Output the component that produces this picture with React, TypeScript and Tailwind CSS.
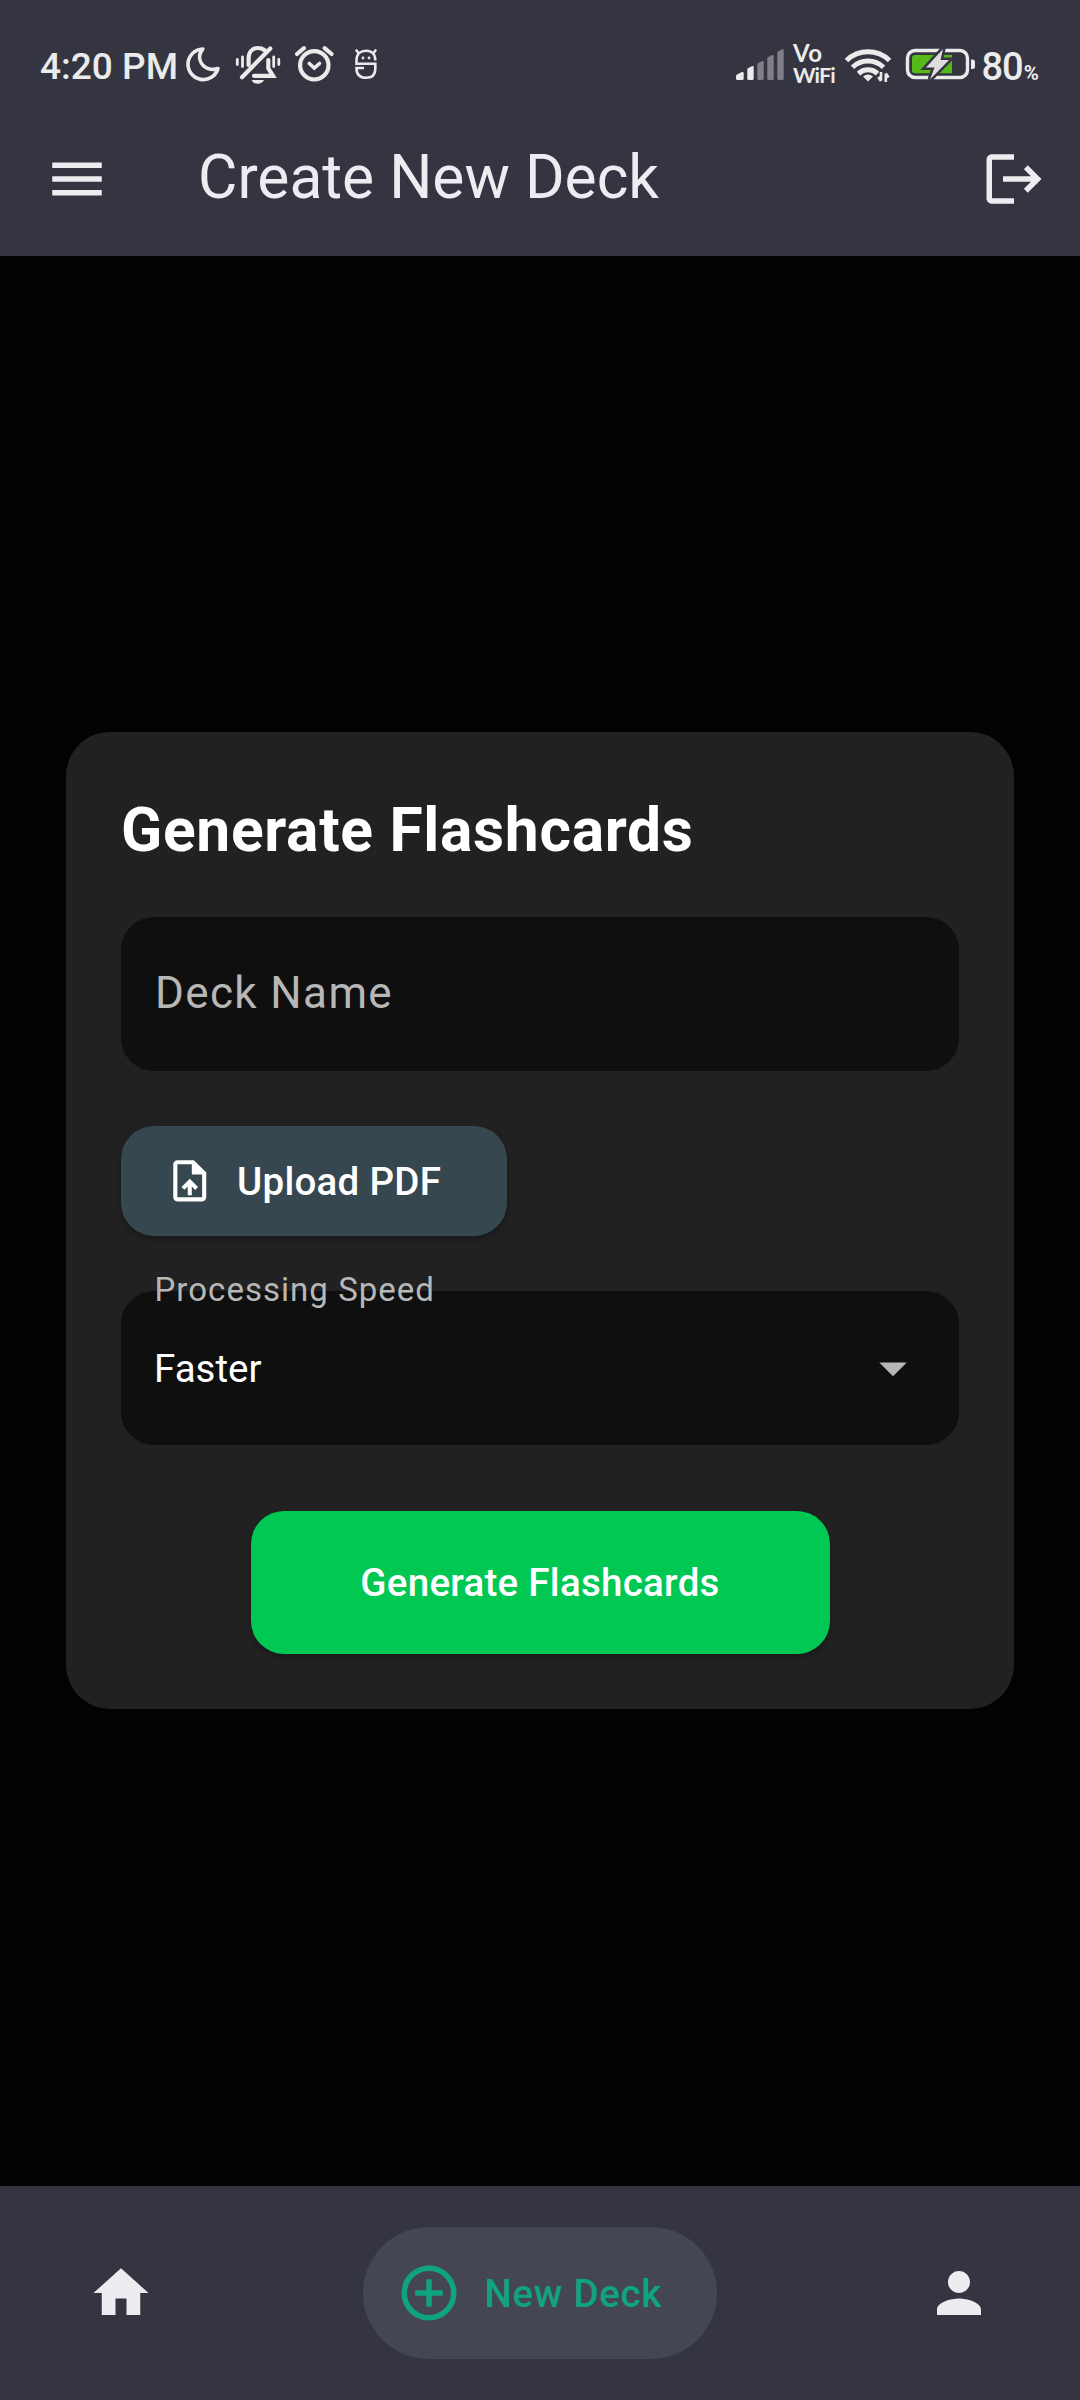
import React from "react";

type IconProps = { d: string; className: string };

function MaterialIcon({ d, className }: IconProps) {
  return (
    <svg viewBox="0 0 24 24" fill="currentColor" className={className} aria-hidden="true">
      <path d={d} />
    </svg>
  );
}

const ICONS = {
  menu: "M3 18h18v-2H3v2zm0-5h18v-2H3v2zm0-7v2h18V6H3z",
  logout:
    "m17 7-1.41 1.41L18.17 11H8v2h10.17l-2.58 2.58L17 17l5-5zM4 5h8V3H4c-1.1 0-2 .9-2 2v14c0 1.1.9 2 2 2h8v-2H4z",
  upload:
    "M14 2H6c-1.1 0-1.99.9-1.99 2L4 20c0 1.1.89 2 1.99 2H18c1.1 0 2-.9 2-2V8l-6-6zm4 18H6V4h7v5h5v11zM8 15.01l1.41 1.41L11 14.84V19h2v-4.16l1.59 1.59L16 15.01 12.01 11z",
  dropdown: "m7 10 5 5 5-5z",
  home: "M10 20v-6h4v6h5v-8h3L12 3 2 12h3v8z",
  addCircle:
    "M13 7h-2v4H7v2h4v4h2v-4h4v-2h-4V7zm-1-5C6.48 2 2 6.48 2 12s4.48 10 10 10 10-4.48 10-10S17.52 2 12 2zm0 18c-4.41 0-8-3.59-8-8s3.59-8 8-8 8 3.59 8 8-3.59 8-8 8z",
  person:
    "M12 12c2.21 0 4-1.79 4-4s-1.79-4-4-4-4 1.79-4 4 1.79 4 4 4zm0 2c-2.67 0-8 1.34-8 4v2h16v-2c0-2.66-5.33-4-8-4z",
};

function LeftStatus() {
  return (
    <div className="flex">
      <span className="ml-[40px] mt-[47px] w-[144px] whitespace-nowrap text-[37px] leading-[40px] font-medium">
        4:20 PM
      </span>
      <svg viewBox="184 0 46 102" className="h-[102px] w-[46px]" fill="none" stroke="currentColor">
        <path
          d="M202.800 49A15.300 15.300 0 1 0 218 68.500C212 70.500 204.500 69 201 62.500C198.500 58 199.500 53 202.800 49Z"
          strokeWidth="3.600"
          strokeLinejoin="round"
        />
      </svg>
      <svg viewBox="230 0 60 102" className="h-[102px] w-[60px]" fill="none" stroke="currentColor" strokeWidth="4.200" strokeLinecap="round">
        <path d="M242 77.300L270.300 48.500" />
        <path d="M248.600 65V58.500C248.600 52 252.500 48 258 48C260.500 48 262.600 48.700 264.300 50" />
        <path d="M268.300 60V68.500L273 75.800H254" />
        <path d="M251.500 80h12.500c-1.500 2.600-3.500 3.800-6.200 3.800s-4.800-1.200-6.300-3.800z" fill="currentColor" stroke="none" />
        <path d="M237.300 59.500v5M242.500 57v9.500M273.700 57v9.500M278.800 59.500v5" strokeWidth="2.800" />
      </svg>
      <svg viewBox="290 0 50 102" className="h-[102px] w-[50px]" fill="none" stroke="currentColor" strokeWidth="4.200">
        <circle cx="314.300" cy="65.300" r="14.200" />
        <path d="M297 54L304 48.200M324.600 48.200L331.600 54" strokeLinecap="round" />
        <path d="M309.300 63.500L314.300 68L319.500 63.500" strokeWidth="3.600" strokeLinecap="round" />
      </svg>
      <svg viewBox="340 0 44 102" className="h-[102px] w-[44px]" fill="none" stroke="currentColor" strokeWidth="2.600">
        <path d="M375.300 60.500C375.300 54 371.500 50.800 366 50.800S356.500 54 356.500 60.500V63.800H375.300V69C375.300 75 371.500 77.800 366 77.800S356.500 75 356.500 68H364" />
        <path d="M358.500 53L356.500 50.500M373.500 53L375.500 50.500" strokeLinecap="round" />
        <circle cx="363" cy="58" r="1.400" fill="currentColor" stroke="none" />
        <circle cx="369" cy="58" r="1.400" fill="currentColor" stroke="none" />
      </svg>
    </div>
  );
}

function RightStatus() {
  return (
    <div className="flex">
      <svg viewBox="732 0 61 102" className="h-[102px] w-[61px]" fill="currentColor">
        <path d="M736 78.500v-2.500q0-1 1-1.500l5-2.500q1.700-.5 1.700 1.300V78.500q0 1.500-1.500 1.500h-4.700q-1.500 0-1.500-1.500z" />
        <path d="M747.300 78.500V69.500q0-1 1-1.500l4-2q1.400-.4 1.400 1V78.500q0 1.500-1.500 1.500h-3.400q-1.500 0-1.500-1.500z" />
        <g className="text-[#807f88]">
          <path d="M757.300 78.500V64.500q0-1 1-1.500l4-2q1.400-.4 1.400 1V78.500q0 1.500-1.500 1.500h-3.400q-1.500 0-1.500-1.500z" />
          <path d="M767.300 78.500V58.500q0-1 1-1.500l4-2q1.400-.4 1.400 1V78.500q0 1.500-1.500 1.500h-3.400q-1.500 0-1.500-1.500z" />
          <path d="M777.300 78.500V52.700q0-1 1-1.500l4-2q1.400-.4 1.400 1V78.500q0 1.500-1.500 1.500h-3.400q-1.500 0-1.500-1.500z" />
        </g>
      </svg>
      <div className="mt-[42px] flex w-[47px] flex-col font-[Lato] leading-[22px] font-bold whitespace-nowrap">
        <span className="text-[24px] tracking-[0.500px]">Vo</span>
        <span className="text-[21.500px] tracking-[-0.900px]">WiFi</span>
      </div>
      <svg viewBox="840 0 60 102" className="h-[102px] w-[60px]" fill="none" stroke="currentColor" strokeWidth="5">
        <path d="M846.500 60.500A31 31 0 0 1 889.500 60.500" />
        <path d="M852.500 67.200A22.500 22.500 0 0 1 883.500 67.200" />
        <path d="M858.500 73.600A13.800 13.800 0 0 1 877.500 73.600" />
        <path d="M863 76.500Q868 72.500 873 76.500L868 81.500z" fill="currentColor" stroke="none" />
        <path d="M881 72v8.500M878.300 77l2.700 4M885.800 82v-8.500M885.800 73.500l2.700 4" strokeWidth="2.600" />
      </svg>
      <svg viewBox="900 0 83 102" className="h-[102px] w-[83px]" fill="none">
        <rect x="907.500" y="50.500" width="60" height="27" rx="7.500" stroke="currentColor" strokeWidth="3.400" />
        <path d="M971 59.500h1.500q2.500 0 2.500 2.500v4.500q0 2.500-2.500 2.500H971z" fill="currentColor" />
        <path d="M915 55H952V73.300H915Q912 73.300 912 70.300V58Q912 55 915 55Z" fill="#55b91a" />
        <path d="M943 49L926 67.500H934.500L930 79.500L949 60H940.500Z" fill="#dededf" stroke="#363541" strokeWidth="5" paintOrder="stroke" />
      </svg>
      <div className="mt-[47px] -ml-[1.500px] flex w-[98.500px] items-baseline leading-[40px] font-medium">
        <span className="text-[38px] tracking-[-1px]">80</span>
        <span className="ml-[1px] text-[20.500px] font-bold">%</span>
      </div>
    </div>
  );
}

export default function App() {
  return (
    <div className="flex h-[2400px] w-[1080px] flex-col overflow-hidden bg-[#020202] font-[Roboto,sans-serif] text-[#ececf1]">
      <header className="h-[256px] shrink-0 bg-[#343541]">
        <div className="flex h-[102px] justify-between text-[#ebebeb]">
          <LeftStatus />
          <RightStatus />
        </div>
        <div className="flex h-[154px] items-center">
          <button className="ml-[43.5px]">
            <MaterialIcon d={ICONS.menu} className="size-[66px]" />
          </button>
          <h1 className="-mt-[3px] ml-[88.500px] text-[60.500px] leading-[77px] font-normal">Create New Deck</h1>
          <button className="mr-[32.800px] ml-auto">
            <MaterialIcon d={ICONS.logout} className="size-[66px]" />
          </button>
        </div>
      </header>

      <main className="flex flex-1 flex-col px-[66px] pt-[476.300px]">
        <section className="flex h-[977px] flex-col rounded-[44px] bg-[#212121] px-[55px] pt-[55px]">
          <h2 className="h-[129.300px] text-[60.500px] leading-[87px] font-bold tracking-[0.690px] text-white">
            Generate Flashcards
          </h2>

          <div className="flex h-[154px] shrink-0 items-center rounded-[33px] bg-[#0f0f0f] px-[34px]">
            <span className="mb-[2px] text-[44px] tracking-[1.375px] text-[#b7b7b7]">Deck Name</span>
          </div>

          <button className="mt-[55px] flex h-[110px] w-[386px] items-center gap-[22px] rounded-[33px] bg-[#37474f] pl-[44px] text-white shadow-[0_3px_5px_rgba(0,0,0,0.25)]">
            <MaterialIcon d={ICONS.upload} className="size-[49.500px]" />
            <span className="mt-[2px] ml-[0.500px] text-[38.500px] tracking-[0.275px] font-medium">Upload PDF</span>
          </button>

          <div className="relative mt-[55px] flex h-[154px] shrink-0 items-center justify-between rounded-[33px] bg-[#0f0f0f] pr-[33px] pl-[33px]">
            <label className="absolute -top-[21px] left-[33.500px] text-[33px] leading-[40px] tracking-[1.030px] text-[#b7b7b7]">
              Processing Speed
            </label>
            <span className="mt-[2px] text-[38.500px] text-white">Faster</span>
            <MaterialIcon d={ICONS.dropdown} className="size-[66px] text-[#b7b7b7]" />
          </div>

          <button className="mt-[66px] flex h-[143px] w-[579px] items-center justify-center self-center rounded-[33px] bg-[#00c853] text-white shadow-[0_3px_5px_rgba(0,0,0,0.25)]">
            <span className="mt-[2px] text-[38.500px] tracking-[0.275px] font-medium">Generate Flashcards</span>
          </button>
        </section>
      </main>

      <nav className="flex h-[214.500px] shrink-0 items-center bg-[#343541]">
        <button className="ml-[88px]">
          <MaterialIcon d={ICONS.home} className="size-[66px]" />
        </button>
        <button className="ml-[209px] flex h-[132px] w-[354px] items-center rounded-full bg-[#444654] pl-[33px] text-[#10a37f]">
          <MaterialIcon d={ICONS.addCircle} className="size-[66px]" />
          <span className="mt-[2px] ml-[22.500px] text-[38.500px] tracking-[0.700px] font-medium">New Deck</span>
        </button>
        <button className="ml-[208.700px]">
          <MaterialIcon d={ICONS.person} className="size-[66px]" />
        </button>
      </nav>
    </div>
  );
}
